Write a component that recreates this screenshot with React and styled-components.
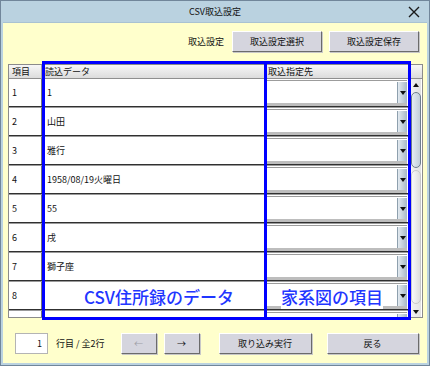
import React from "react";
import styled, { createGlobalStyle } from "styled-components";

const GlobalStyle = createGlobalStyle`
  html, body { margin: 0; padding: 0; background: #ffffff; }
  body { font-family: "Noto Sans CJK JP", "Noto Sans", sans-serif; }
  * { box-sizing: border-box; }
`;

const Window = styled.div`
  position: relative;
  width: 430px;
  height: 366px;
  border: 1px solid #71869a;
  background: #bad2e0;
  display: flex;
  flex-direction: column;
  overflow: hidden;
`;

const TitleBar = styled.div`
  height: 21px;
  display: grid;
  grid-template-columns: 1fr auto 1fr;
  align-items: center;
  font-size: 9px;
  color: #111;
`;

const TitleText = styled.div`
  grid-column: 2;
`;

const CloseBtn = styled.div`
  grid-column: 3;
  justify-self: end;
  margin-right: 9px;
  width: 12px;
  height: 12px;
  display: flex;
`;

const Body = styled.div`
  flex: 1;
  margin: 0 2px 2px 2px;
  background: #ffffcc;
  display: flex;
  flex-direction: column;
  border-top: 1px solid #a9c2d2;
`;

const Toolbar = styled.div`
  display: flex;
  justify-content: flex-end;
  align-items: center;
  gap: 7px;
  margin-top: 8px;
  padding-right: 8px;
  height: 21px;
`;

const Label = styled.span`
  font-size: 9px;
  color: #111;
  margin-right: 1px;
  white-space: nowrap;
`;

const Button = styled.button`
  width: ${(p) => p.$w}px;
  height: 21px;
  padding: 0;
  font-family: inherit;
  font-size: 9px;
  color: ${(p) => (p.$disabled ? "#a0a0a8" : "#111")};
  background: #d5d5de;
  border-top: 1px solid #ffffff;
  border-left: 1px solid #ffffff;
  border-right: 1px solid #6b6b6b;
  border-bottom: 1px solid #6b6b6b;
  box-shadow: 1px 1px 0 #c8c8c8;
  display: flex;
  align-items: center;
  justify-content: center;
`;

const Grid = styled.div`
  margin: 12px 4px 0 5px;
  height: 254px;
  border: 1px solid #8b8b8b;
  background: #ffffff;
  display: flex;
  flex-direction: column;
  overflow: hidden;
`;

const HeaderRow = styled.div`
  height: 14px;
  flex: none;
  display: grid;
  grid-template-columns: 33px 223px 1fr;
  background: linear-gradient(#f7f7f7, #dcdcdc);
  border-bottom: 1px solid #8f8f8f;
`;

const HeaderCell = styled.div`
  font-size: 9px;
  line-height: 13px;
  padding-left: 3px;
  color: #111;
  border-right: ${(p) => (p.$last ? "none" : "1px solid #a0a0a0")};
  white-space: nowrap;
`;

const Main = styled.div`
  flex: 1;
  display: flex;
  min-height: 0;
`;

const Rows = styled.div`
  width: 401px;
  display: flex;
  flex-direction: column;
  overflow: hidden;
`;

const Row = styled.div`
  flex: none;
  height: 28px;
  display: grid;
  grid-template-columns: 33px 223px 145px;
  border-bottom: 1px solid #303030;
  box-shadow: 0 1px 0 #9a9a9a;
  margin-bottom: 1px;
`;

const Cell = styled.div`
  display: flex;
  align-items: center;
  font-size: 9px;
  color: #111;
  padding-left: ${(p) => p.$pad}px;
  border-right: ${(p) => (p.$line ? "1px solid #777" : "none")};
  white-space: nowrap;
`;

const ComboCell = styled.div`
  display: flex;
  padding: 1px 3px 0 1px;
`;

const Combo = styled.div`
  flex: 1;
  display: flex;
  justify-content: flex-end;
  background: #ffffff;
  border-top: 1px solid #9c9c9c;
  border-bottom: 3px solid #bdbdbd;
  padding-top: 1px;
`;

const DropBtn = styled.div`
  width: 10px;
  display: flex;
  align-items: center;
  justify-content: center;
  background: linear-gradient(to right, #e3eaf0, #a8b8c6);
  border-left: 1px solid #8ea0ae;
`;

const ScrollBar = styled.div`
  width: 11px;
  display: flex;
  flex-direction: column;
  background: linear-gradient(to right, #f2f2f2, #e2e2e2);
  border-left: 1px solid #d0d0d0;
`;

const ScrollArrow = styled.div`
  height: 11px;
  flex: none;
  display: flex;
  align-items: center;
  justify-content: center;
`;

const Thumb = styled.div`
  height: 76px;
  flex: none;
  margin-top: 2px;
  border: 1px solid #6f7f8c;
  border-radius: 6px;
  background: linear-gradient(to right, #e6edf3, #c2cfda);
`;

const Track = styled.div`
  flex: 1;
  margin: 2px 0;
  border: 1px solid #c9c9c9;
  border-radius: 6px;
  background: linear-gradient(to right, #f9f9f9, #dedede);
`;

const Footer = styled.div`
  display: flex;
  align-items: center;
  margin-top: 14px;
  padding-left: 12px;
  height: 22px;
`;

const PageInput = styled.div`
  width: 33px;
  height: 21px;
  background: #ffffff;
  border: 1px solid #b4b4b4;
  font-size: 9px;
  color: #111;
  display: flex;
  align-items: center;
  justify-content: flex-end;
  padding-right: 5px;
`;

const PageLabel = styled.span`
  font-size: 9px;
  color: #111;
  margin: 0 16px 0 8px;
  white-space: nowrap;
`;

const NavGroup = styled.div`
  display: flex;
  gap: 7px;
  margin-right: 19px;
`;

const ActionGroup = styled.div`
  display: flex;
  gap: 15px;
`;

const BlueBox = styled.div`
  position: absolute;
  top: 60px;
  left: ${(p) => p.$left}px;
  width: ${(p) => p.$w}px;
  height: 259px;
  border: 3px solid #0000ff;
  pointer-events: none;
`;

const Annotation = styled.div`
  position: absolute;
  top: 284px;
  left: ${(p) => p.$left}px;
  font-size: 17px;
  line-height: 24px;
  font-weight: 500;
  color: #1f36ff;
  white-space: nowrap;
  background: ${(p) => (p.$bg ? "#ffffff" : "transparent")};
`;

const Tri = ({ up }) => (
  <svg width="6" height="4" viewBox="0 0 6 4">
    {up ? <polygon points="0,4 6,4 3,0" fill="#111" /> : <polygon points="0,0 6,0 3,4" fill="#111" />}
  </svg>
);

const rows = [
  ["1", "1"],
  ["2", "山田"],
  ["3", "雅行"],
  ["4", "1958/08/19火曜日"],
  ["5", "55"],
  ["6", "戌"],
  ["7", "獅子座"],
  ["8", ""],
  ["", ""],
];

export default function App() {
  return (
    <>
      <GlobalStyle />
      <Window>
        <TitleBar>
          <TitleText>CSV取込設定</TitleText>
          <CloseBtn>
            <svg width="12" height="12" viewBox="0 0 12 12">
              <path d="M1 1 L11 11 M11 1 L1 11" stroke="#1a1a1a" strokeWidth="1.4" />
            </svg>
          </CloseBtn>
        </TitleBar>
        <Body>
          <Toolbar>
            <Label>取込設定</Label>
            <Button $w={90}>取込設定選択</Button>
            <Button $w={90}>取込設定保存</Button>
          </Toolbar>
          <Grid>
            <HeaderRow>
              <HeaderCell>項目</HeaderCell>
              <HeaderCell>読込データ</HeaderCell>
              <HeaderCell $last>取込指定先</HeaderCell>
            </HeaderRow>
            <Main>
              <Rows>
                {rows.map(([n, v], i) => (
                  <Row key={i}>
                    <Cell $pad={3} $line>{n}</Cell>
                    <Cell $pad={5}>{v}</Cell>
                    <ComboCell>
                      <Combo>
                        <DropBtn>
                          <Tri />
                        </DropBtn>
                      </Combo>
                    </ComboCell>
                  </Row>
                ))}
              </Rows>
              <ScrollBar>
                <ScrollArrow>
                  <Tri up />
                </ScrollArrow>
                <Thumb />
                <Track />
                <ScrollArrow>
                  <Tri />
                </ScrollArrow>
              </ScrollBar>
            </Main>
          </Grid>
          <Footer>
            <PageInput>1</PageInput>
            <PageLabel>行目 / 全2行</PageLabel>
            <NavGroup>
              <Button $w={36} $disabled>←</Button>
              <Button $w={36}>→</Button>
            </NavGroup>
            <ActionGroup>
              <Button $w={93}>取り込み実行</Button>
              <Button $w={92}>戻る</Button>
            </ActionGroup>
          </Footer>
        </Body>
        <BlueBox $left={41} $w={225} />
        <BlueBox $left={263} $w={147} />
        <Annotation $left={83}>CSV住所録のデータ</Annotation>
        <Annotation $left={280} $bg>家系図の項目</Annotation>
      </Window>
    </>
  );
}
